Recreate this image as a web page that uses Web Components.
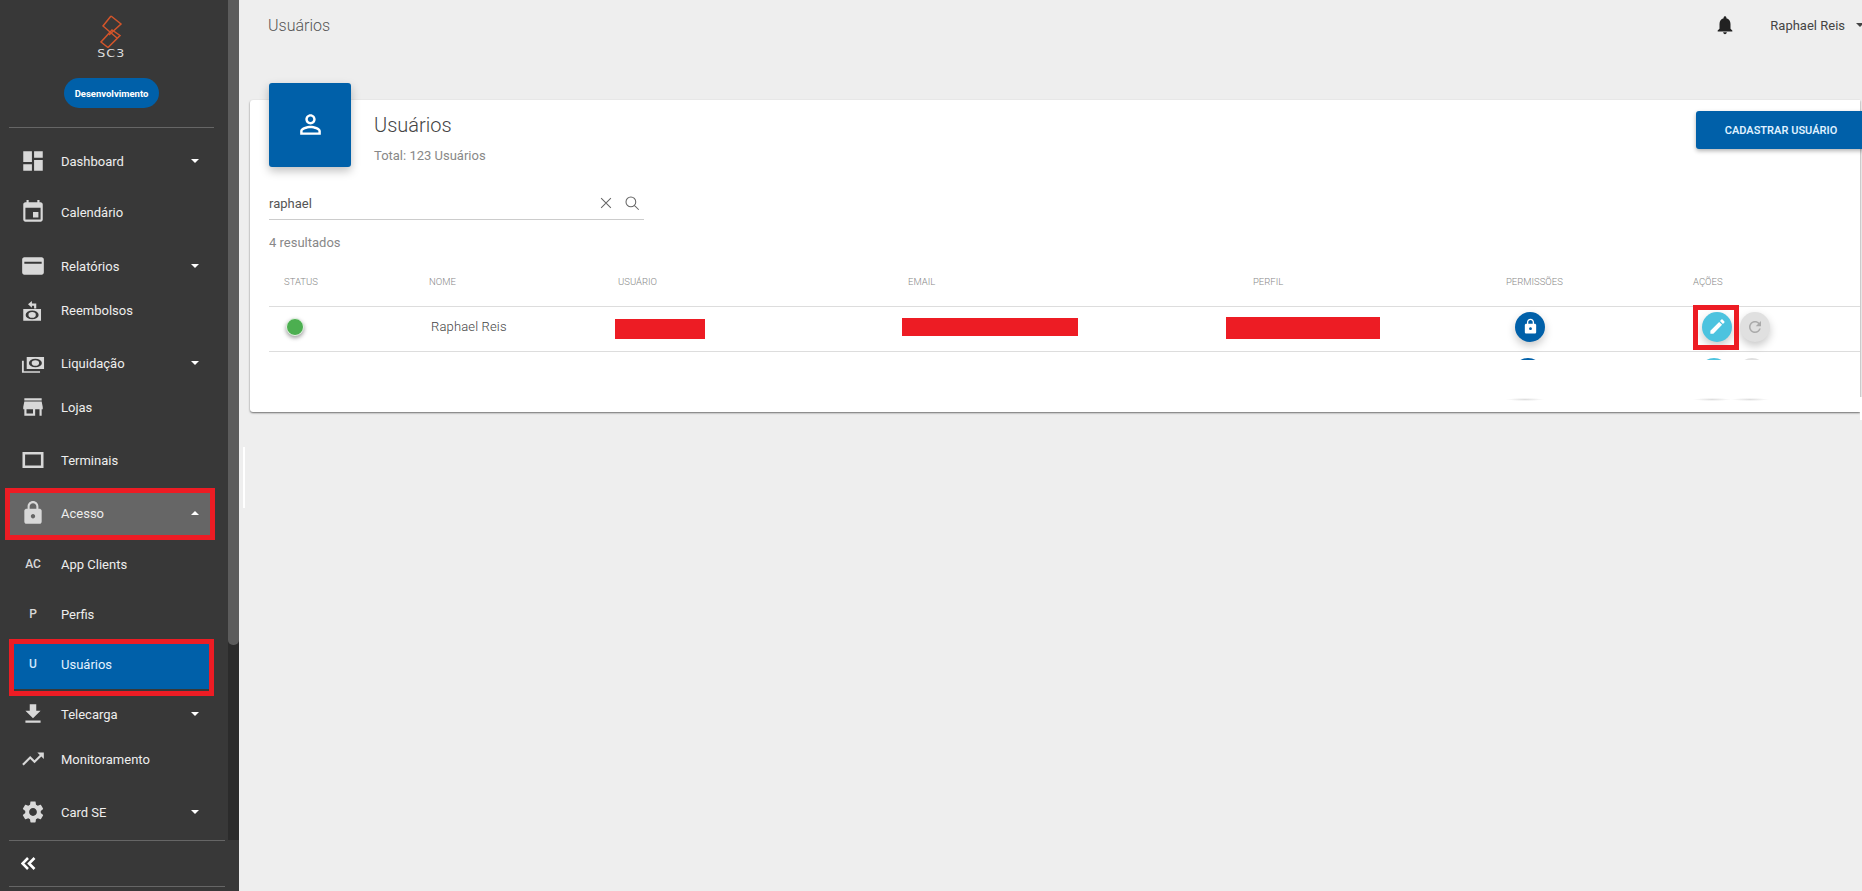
<!DOCTYPE html>
<html lang="pt-BR">
<head>
<meta charset="utf-8">
<title>Usuários</title>
<style>
  html, body { margin: 0; height: 100%; overflow: hidden; }
  body { font-family: Roboto, "Liberation Sans", sans-serif; background: #eee; }
</style>
</head>
<body>
<app-shell>
  <side-nav slot="nav">
    <nav-item icon="dashboard" caret="down" style="margin-top:11px">Dashboard</nav-item>
    <nav-item icon="event" style="margin-top:7px">Calendário</nav-item>
    <nav-item icon="card" caret="down" style="margin-top:10px">Relatórios</nav-item>
    <nav-item icon="refund">Reembolsos</nav-item>
    <nav-item icon="payments" caret="down" style="margin-top:9px">Liquidação</nav-item>
    <nav-item icon="store">Lojas</nav-item>
    <nav-item icon="terminal" style="margin-top:9px">Terminais</nav-item>
    <nav-item icon="lock" caret="up" open marked style="margin-top:11px">Acesso</nav-item>
    <nav-item letter="AC" style="margin-top:7px">App Clients</nav-item>
    <nav-item letter="P" style="margin-top:6px">Perfis</nav-item>
    <nav-item letter="U" active marked style="margin-top:8px">Usuários</nav-item>
    <nav-item icon="download" caret="down" style="margin-top:3px">Telecarga</nav-item>
    <nav-item icon="trending" style="margin-top:1px">Monitoramento</nav-item>
    <nav-item icon="settings" caret="down" style="margin-top:9px">Card SE</nav-item>
  </side-nav>
  <top-bar title-text="Usuários" user="Raphael Reis"></top-bar>
  <users-card></users-card>
</app-shell>

<script>
const ICONS = {
  dashboard: "M3 13h8V3H3v10zm0 8h8v-6H3v6zm10 0h8V11h-8v10zm0-18v6h8V3h-8z",
  event: "M17 12h-5v5h5v-5zM16 1v2H8V1H6v2H5c-1.11 0-1.99.9-1.99 2L3 19c0 1.1.89 2 2 2h14c1.1 0 2-.9 2-2V5c0-1.1-.9-2-2-2h-1V1h-2zm3 18H5V8h14v11z",
  card: "M20 4H4c-1.1 0-2 .9-2 2v12c0 1.1.9 2 2 2h16c1.1 0 2-.9 2-2V6c0-1.1-.9-2-2-2zm0 6H4V8h16v2z",
  refund: "M3 11h16.400v11H3zM5.200 16.500a6 4 0 1 0 12 0 6 4 0 1 0-12 0zM7.800 16.500a3.400 2.600 0 1 0 6.800 0 3.400 2.600 0 1 0-6.800 0zM11 3.700L7.400 6.800 11 10V8h2v2.500h2V6h-4z",
  payments: "M6.200 6.500h16v11h-16zM8.200 12a6 4 0 1 0 12 0 6 4 0 1 0-12 0zM10.800 12a3.400 2.600 0 1 0 6.800 0 3.400 2.600 0 1 0-6.800 0zM1.800 10h1.700v9.500h15V21H1.800z",
  store: "M20 4H4v2h16V4zm1 10v-2l-1-5H4l-1 5v2h1v6h10v-6h4v6h2v-6h1zm-9 4H6v-4h6v4z",
  terminal: "M2.300 4.600h19.400v14.800H2.300zM4.700 7v10h14.600V7z",
  lock: "M18 8h-1V6c0-2.760-2.240-5-5-5S7 3.240 7 6v2H6c-1.100 0-2 .9-2 2v10c0 1.100.9 2 2 2h12c1.100 0 2-.9 2-2V10c0-1.100-.9-2-2-2zm-6 9c-1.100 0-2-.9-2-2s.9-2 2-2 2 .9 2 2-.9 2-2 2zm3.100-9H8.900V6c0-1.710 1.390-3.100 3.100-3.100 1.710 0 3.100 1.390 3.100 3.100v2z",
  download: "M19 9h-4V3H9v6H5l7 7 7-7zM5 18v2h14v-2H5z",
  trending: "M16 6l2.290 2.290-4.880 4.880-4-4L2 16.590 3.410 18l6-6 4 4 6.300-6.290L22 12V6z",
  settings: "M19.140 12.940c.04-.3.06-.61.06-.94 0-.32-.02-.64-.07-.94l2.030-1.580c.18-.14.23-.41.12-.61l-1.920-3.320c-.12-.22-.37-.29-.59-.22l-2.390.96c-.5-.38-1.030-.7-1.620-.94l-.36-2.540c-.04-.24-.24-.41-.48-.41h-3.840c-.24 0-.43.17-.47.41l-.36 2.540c-.59.24-1.130.57-1.620.94l-2.390-.96c-.22-.08-.47 0-.59.22L2.740 8.870c-.12.21-.08.47.12.61l2.030 1.580c-.05.3-.09.63-.09.94s.02.64.07.94l-2.030 1.580c-.18.14-.23.41-.12.61l1.920 3.320c.12.22.37.29.59.22l2.390-.96c.5.38 1.030.7 1.620.94l.36 2.540c.05.24.24.41.48.41h3.840c.24 0 .44-.17.47-.41l.36-2.540c.59-.24 1.130-.56 1.620-.94l2.390.96c.22.08.47 0 .59-.22l1.920-3.320c.12-.22.07-.47-.12-.61l-2.010-1.580zM12 15.600c-1.980 0-3.600-1.620-3.600-3.600s1.620-3.600 3.600-3.600 3.600 1.620 3.600 3.600-1.620 3.600-3.600 3.600z",
  person: "M12 5.900c1.160 0 2.100.94 2.100 2.100s-.94 2.100-2.100 2.100S9.900 9.160 9.900 8s.94-2.100 2.100-2.100m0 9c2.970 0 6.100 1.460 6.100 2.100v1.100H5.900V17c0-.64 3.130-2.100 6.100-2.100M12 4C9.790 4 8 5.790 8 8s1.790 4 4 4 4-1.790 4-4-1.790-4-4-4zm0 9c-2.670 0-8 1.340-8 4v3h16v-3c0-2.660-5.330-4-8-4z",
  bell: "M12 22c1.100 0 2-.9 2-2h-4c0 1.100.89 2 2 2zm6-6v-5c0-3.070-1.640-5.640-4.500-6.320V4c0-.83-.67-1.500-1.500-1.500s-1.500.67-1.500 1.500v.68C7.630 5.360 6 7.920 6 11v5l-2 2v1h16v-1l-2-2z",
  edit: "M3 17.250V21h3.750L17.810 9.940l-3.750-3.750L3 17.250zM20.710 7.040c.39-.39.39-1.020 0-1.410l-2.340-2.340c-.39-.39-1.020-.39-1.410 0l-1.830 1.830 3.750 3.750 1.830-1.830z",
  refresh: "M17.650 6.350C16.200 4.900 14.210 4 12 4c-4.420 0-7.990 3.580-7.990 8s3.570 8 7.990 8c3.730 0 6.840-2.550 7.730-6h-2.080c-.82 2.330-3.040 4-5.650 4-3.310 0-6-2.690-6-6s2.690-6 6-6c1.660 0 3.140.69 4.220 1.780L13 11h7V4l-2.350 2.350z",
  close: "M5.500 5.500l13 13M18.500 5.500l-13 13",
  search: "M10.500 4a6.500 6.500 0 1 1 0 13 6.500 6.500 0 0 1 0-13zM15.200 15.200L21 21"
};

class AppIcon extends HTMLElement {
  constructor() {
    super();
    this.attachShadow({ mode: "open" });
  }
  connectedCallback() {
    const d = ICONS[this.getAttribute("name")] || "";
    this.shadowRoot.innerHTML = `
      <style>
        :host { display: inline-flex; width: var(--size, 24px); height: var(--size, 24px); }
        svg { width: 100%; height: 100%; fill: currentColor; display: block; }
        :host([line]) svg { fill: none; stroke: currentColor; stroke-width: 1.4; }
      </style>
      <svg viewBox="0 0 24 24"><path fill-rule="evenodd" d="${d}"/></svg>`;
  }
}
customElements.define("app-icon", AppIcon);

class AppShell extends HTMLElement {
  constructor() {
    super();
    this.attachShadow({ mode: "open" });
    this.shadowRoot.innerHTML = `
      <style>
        :host { display: grid; grid-template-columns: 239px 1fr; height: 891px; width: 1862px; overflow: hidden; background: #eee; }
        main { position: relative; min-width: 0; }
        /* thin leftovers in the gutters of the page */
        .handle { position: absolute; left: 4px; top: 447px; width: 2px; height: 61px; background: #fff; }
        .scrap { position: absolute; right: 0; top: 397px; width: 2px; height: 23px; background: #fff; }
      </style>
      <slot name="nav"></slot>
      <main><slot></slot><div class="handle"></div><div class="scrap"></div></main>`;
  }
}
customElements.define("app-shell", AppShell);

class SideNav extends HTMLElement {
  constructor() {
    super();
    this.attachShadow({ mode: "open" });
    this.shadowRoot.innerHTML = `
      <style>
        :host { display: flex; flex-direction: column; height: 891px; background: #383838; color: #eee; }
        .upper { display: grid; grid-template-columns: 228px 11px; height: 840px; }
        .scroll { display: flex; flex-direction: column; min-width: 0; }
        .bar { background: #2b2b2b; }
        .thumb { height: 645px; background: #5c5c5c; border-radius: 0 0 5px 5px; }
        .brand { display: flex; flex-direction: column; align-items: center; padding-top: 15px; }
        .brand svg { display: block; width: 24px; height: 33px; margin-left: -6px; }
        .sc3 { font: 11px/10px "DejaVu Sans", sans-serif; color: #ddd; letter-spacing: 1px; margin: 1px 0 0 -6px; transform: scaleX(1.15); height: 10px; }
        .pill { margin: 19px 0 0 -5px; width: 95px; height: 30px; border-radius: 15px; background: #0060a9; color: #fff; font-size: 9.500px; font-weight: 700; display: flex; align-items: center; justify-content: center; }
        hr { border: 0; border-top: 1px solid #666; margin: 0; }
        .top-line { margin: 19px 14px 0 9px; }
        .foot { flex: 1; display: flex; flex-direction: column; }
        .foot-line { margin: 0 14px 0 9px; }
        .collapse { height: 45px; display: flex; align-items: center; padding-left: 21px; }
        .collapse svg { width: 15px; height: 13px; fill: none; stroke: #fff; stroke-width: 2.6; }
      </style>
      <div class="upper">
        <div class="scroll">
          <div class="brand">
            <svg viewBox="0 0 24 33" fill="none" stroke="#d2552b" stroke-width="1.5">
              <path d="M12 1L4 11l14 12"/>
              <path d="M12 1l10 8-12 11"/>
              <path d="M13 15L2 27l7 5.500 12-12z"/>
            </svg>
            <div class="sc3">SC3</div>
            <div class="pill">Desenvolvimento</div>
          </div>
          <hr class="top-line">
          <slot></slot>
        </div>
        <div class="bar"><div class="thumb"></div></div>
      </div>
      <div class="foot">
        <hr class="foot-line">
        <div class="collapse" aria-label="Recolher menu">
          <svg viewBox="0 0 15 13"><path d="M7 1L1.500 6.500 7 12M13.500 1L8 6.500l5.500 5.500"/></svg>
        </div>
        <hr class="foot-line">
      </div>`;
  }
}
customElements.define("side-nav", SideNav);

class NavItem extends HTMLElement {
  constructor() {
    super();
    this.attachShadow({ mode: "open" });
  }
  connectedCallback() {
    const icon = this.getAttribute("icon");
    const letter = this.getAttribute("letter");
    const caret = this.getAttribute("caret");
    const lead = icon
      ? `<app-icon name="${icon}"></app-icon>`
      : `<span class="letter">${letter}</span>`;
    this.shadowRoot.innerHTML = `
      <style>
        :host { display: block; height: 44px; margin: 0 18px 0 10px; position: relative; font-size: 13px; color: #eee; }
        :host([open]) { height: 42px; }
        :host([active]) { height: 45px; margin-left: 14px; margin-right: 19px; }
        .row { display: flex; align-items: center; height: 100%; box-sizing: border-box; padding-left: 11px; padding-right: 11px; }
        :host([open]) .row { background: #666; padding-bottom: 2px; }
        :host([active]) .row { background: #0060a9; padding-left: 7px; padding-bottom: 5px; color: #e4f2ff; }
        .lead { width: 24px; height: 24px; display: flex; align-items: center; justify-content: center; color: #d8d8d8; flex: none; }
        :host([active]) .lead { color: #cfe6fb; }
        app-icon { --size: 26px; flex: none; }
        .letter { font-size: 12px; font-weight: 500; }
        .label { margin-left: 16px; flex: 1; white-space: nowrap; }
        .caret { width: 0; height: 0; border-left: 4px solid transparent; border-right: 4px solid transparent; }
        .caret.down { border-top: 4px solid #fff; }
        .caret.up { border-bottom: 4px solid #fff; }
        /* red annotation box drawn on top of the screenshot */
        .mark { position: absolute; inset: -5px -5px -5px -5px; border: 5px solid #ed1c24; pointer-events: none; }
        :host([active]) .mark { bottom: -7px; }
      </style>
      <div class="row">
        <div class="lead">${lead}</div>
        <div class="label"><slot></slot></div>
        ${caret ? `<div class="caret ${caret}"></div>` : ""}
      </div>
      ${this.hasAttribute("marked") ? `<div class="mark"></div>` : ""}`;
  }
}
customElements.define("nav-item", NavItem);

class TopBar extends HTMLElement {
  constructor() {
    super();
    this.attachShadow({ mode: "open" });
  }
  connectedCallback() {
    this.shadowRoot.innerHTML = `
      <style>
        :host { display: flex; align-items: center; height: 50px; padding-left: 29px; color: #555; }
        .title { font-size: 16px; font-weight: 300; flex: 1; }
        app-icon { --size: 22px; color: #222; margin-right: 34px; }
        .user { font-size: 13px; color: #444; }
        .caret { width: 0; height: 0; border-left: 4px solid transparent; border-right: 4px solid transparent; border-top: 4px solid #444; margin: 0 -2px 0 11px; }
      </style>
      <div class="title">${this.getAttribute("title-text")}</div>
      <app-icon name="bell"></app-icon>
      <div class="user">${this.getAttribute("user")}</div>
      <div class="caret"></div>`;
  }
}
customElements.define("top-bar", TopBar);

class RoundButton extends HTMLElement {
  constructor() {
    super();
    this.attachShadow({ mode: "open" });
  }
  connectedCallback() {
    const icon = this.getAttribute("icon");
    this.shadowRoot.innerHTML = `
      <style>
        :host { display: inline-flex; align-items: center; justify-content: center; width: 30px; height: 30px; border-radius: 50%; background: var(--bg, #0060a9); color: var(--fg, #fff); box-shadow: 0 4px 8px rgba(0,0,0,.22); flex: none; }
        app-icon { --size: var(--icon, 17px); }
      </style>
      ${icon ? `<app-icon name="${icon}"></app-icon>` : ""}`;
  }
}
customElements.define("round-button", RoundButton);

class UsersCard extends HTMLElement {
  constructor() {
    super();
    this.attachShadow({ mode: "open" });
    this.shadowRoot.innerHTML = `
      <style>
        :host { display: flow-root; margin: 50px 2px 0 11px; height: 312px; box-sizing: border-box; padding-left: 19px; background: #fff; border-radius: 3px 0 0 3px; box-shadow: 0 1px 2px rgba(0,0,0,.55); color: #444; }
        .head { display: flex; margin-top: -17px; height: 84px; }
        .tile { width: 82px; height: 84px; border-radius: 3px; background: #0060a9; color: #fff; display: flex; align-items: center; justify-content: center; box-shadow: 0 4px 10px rgba(0,0,0,.25); flex: none; }
        .tile app-icon { --size: 31px; margin-bottom: 1px; }
        .titles { margin-left: 23px; flex: 1; padding-top: 29px; }
        .titles h1 { margin: 0; font-size: 20px; line-height: 26px; font-weight: 300; color: #444; }
        .titles p { margin: 10px 0 0; font-size: 13px; line-height: 16px; color: #888; }
        .cta { margin: 28px -6px 0 0; width: 170px; height: 38px; border-radius: 3px 0 0 3px; background: #0060a9; color: #dff0ff; font-size: 11px; font-weight: 600; display: flex; align-items: center; justify-content: center; box-sizing: border-box; box-shadow: 0 2px 4px rgba(0,0,0,.3); }
        .search { display: flex; align-items: center; width: 375px; height: 32px; margin-top: 20px; border-bottom: 1px solid #ccc; font-size: 13px; color: #555; }
        .search span { flex: 1; }
        .search app-icon { --size: 18px; color: #666; margin-right: 8px; }
        .search app-icon:last-child { margin-right: 3px; }
        .count { height: 22px; line-height: 22px; margin-top: 12px; font-size: 13px; color: #888; }
        .grid { display: grid; grid-template-columns: 160px 189px 290px 345px 253px 187px 1fr; align-items: center; }
        .thead { margin-top: 8px; height: 44px; border-bottom: 1px solid #ddd; font-size: 9.500px; font-weight: 300; color: #888; }
        .thead > div { margin-bottom: 6px; }
        .thead > :first-child { padding-left: 15px; }
        .trow { height: 44px; border-bottom: 1px solid #ddd; font-size: 13px; font-weight: 300; color: #444; letter-spacing: .15px; }
        .trow > * { margin-bottom: 5px; }
        .dot { width: 18px; height: 18px; margin-left: 17px; border-radius: 50%; background: #4caf50; border: 1px solid #e6f4e6; box-sizing: border-box; box-shadow: 0 2px 4px rgba(0,0,0,.4); }
        .name { margin-left: 2px; }
        .redact { background: #ed1c24; }
        .r1 { margin-left: -3px; width: 90px; height: 20px; margin-top: 5px; }
        .r2 { margin-left: -6px; width: 176px; height: 18px; }
        .r3 { margin-left: -27px; width: 154px; height: 22px; margin-top: 3px; }
        .actions { display: flex; gap: 8px; margin-left: 9px; position: relative; }
        .perm { margin-left: 9px; }
        .grey { --bg: #e0e0e0; --fg: #aaa; --icon: 18px; }
        .cyan { --bg: #4cc3df; --icon: 19px; }
        .mark { position: absolute; left: -9px; top: -7px; width: 46px; height: 45px; box-sizing: border-box; border: 5px solid #ed1c24; }
        .peek { height: 2px; margin-top: 6px; overflow: hidden; align-items: start; }
        .peek round-button { box-shadow: none; }
        .peek .actions { margin-left: 6px; }
        .peek .perm { margin-left: 7px; }
        .fade { margin-top: 38px; height: 3px; }
        .fade i { display: block; width: 38px; height: 3px; background: radial-gradient(ellipse at center, #ddd, transparent 70%); }
        .fade .perm { margin-left: 0; }
        .fade .actions { margin-left: 0; gap: 0; }
      </style>
      <div class="head">
        <div class="tile"><app-icon name="person"></app-icon></div>
        <div class="titles">
          <h1>Usuários</h1>
          <p>Total: 123 Usuários</p>
        </div>
        <div class="cta">CADASTRAR USUÁRIO</div>
      </div>
      <div class="search">
        <span>raphael</span>
        <app-icon name="close" line></app-icon>
        <app-icon name="search" line></app-icon>
      </div>
      <div class="count">4 resultados</div>
      <div class="grid thead">
        <div>STATUS</div><div>NOME</div><div>USUÁRIO</div><div>EMAIL</div><div>PERFIL</div><div>PERMISSÕES</div><div>AÇÕES</div>
      </div>
      <div class="grid trow">
        <div><div class="dot"></div></div>
        <div class="name">Raphael Reis</div>
        <div><div class="redact r1"></div></div>
        <div><div class="redact r2"></div></div>
        <div><div class="redact r3"></div></div>
        <div class="perm"><round-button icon="lock"></round-button></div>
        <div class="actions">
          <round-button class="cyan" icon="edit"></round-button>
          <round-button class="grey" icon="refresh"></round-button>
          <div class="mark"></div>
        </div>
      </div>
      <div class="grid peek">
        <div></div><div></div><div></div><div></div><div></div>
        <div class="perm"><round-button></round-button></div>
        <div class="actions">
          <round-button class="cyan"></round-button>
          <round-button class="grey"></round-button>
        </div>
      </div>
      <div class="grid fade">
        <div></div><div></div><div></div><div></div><div></div>
        <div class="perm"><i></i></div>
        <div class="actions"><i></i><i></i></div>
      </div>`;
  }
}
customElements.define("users-card", UsersCard);
</script>
</body>
</html>
